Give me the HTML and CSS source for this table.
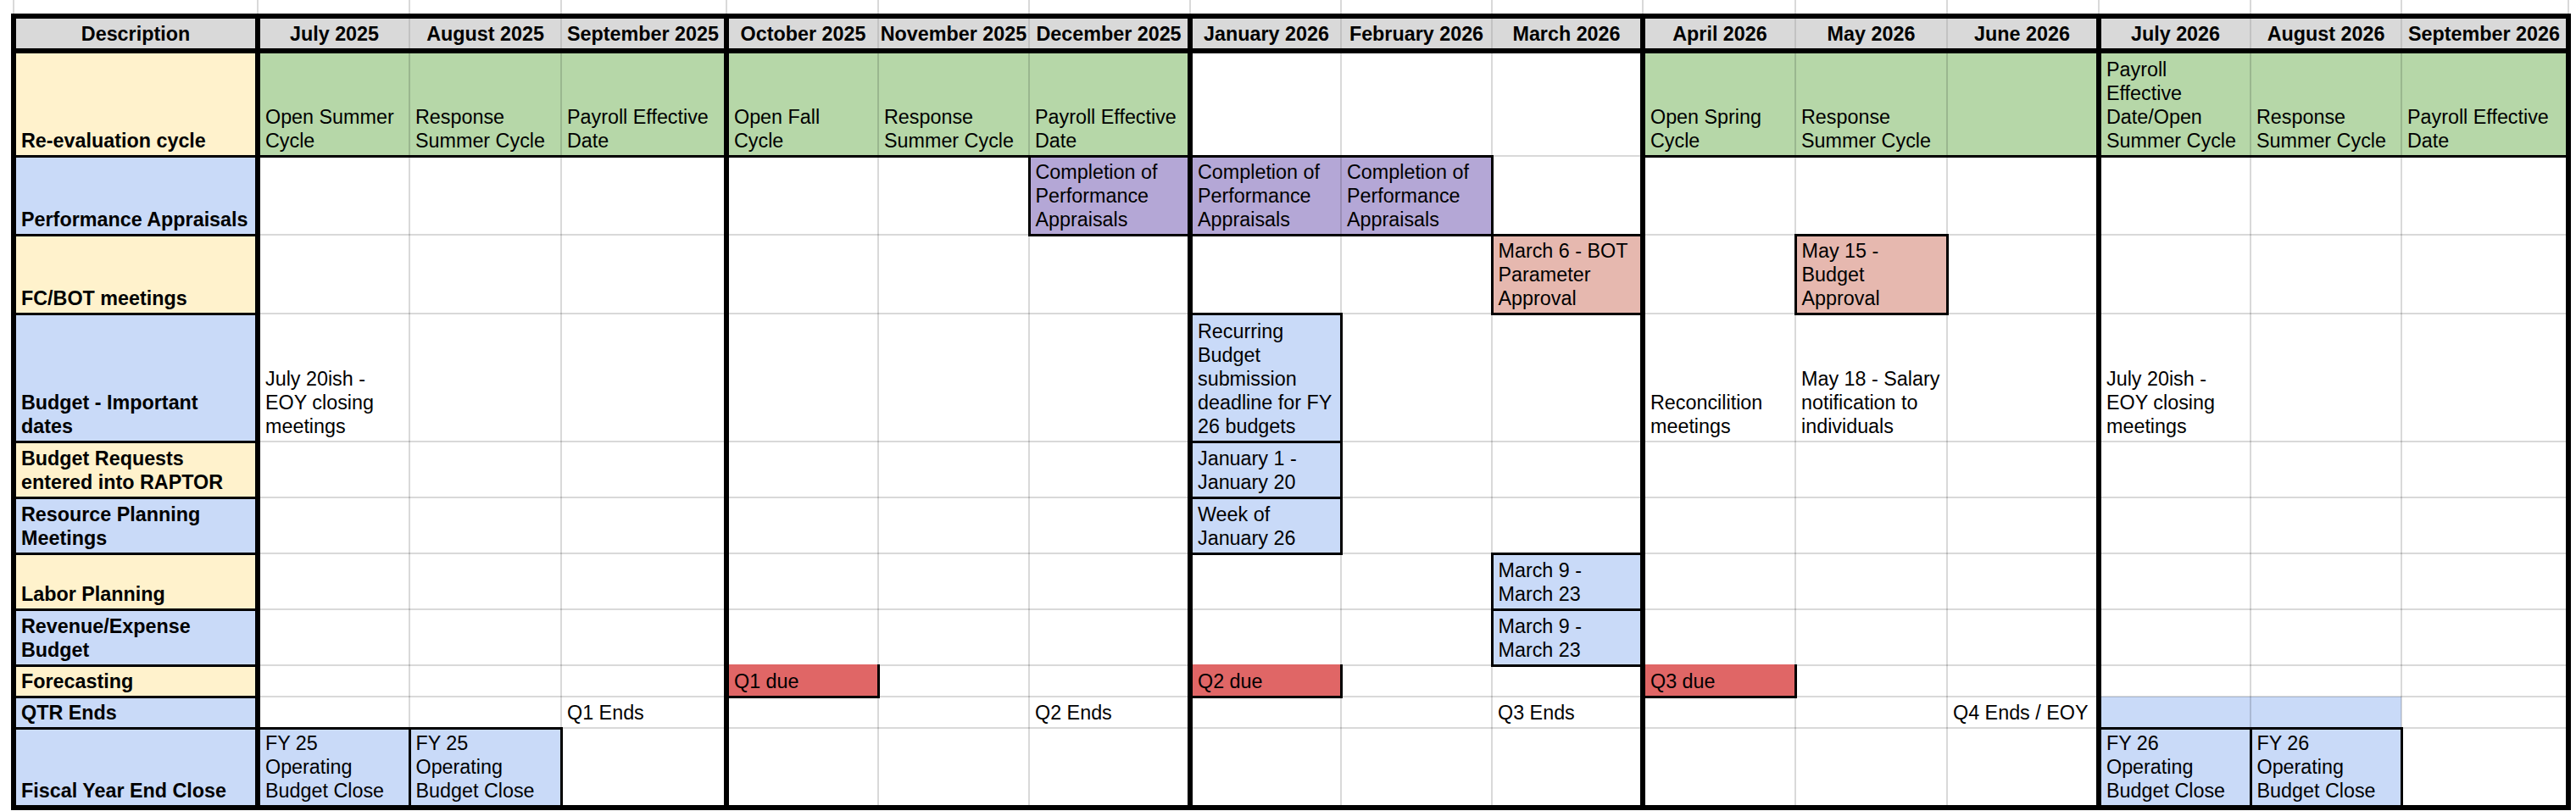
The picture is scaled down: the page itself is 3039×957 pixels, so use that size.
FILE: index.html
```html
<!DOCTYPE html>
<html lang="en">
<head>
  <meta charset="UTF-8" />
  <title>Budget Calendar FY26</title>
  <link rel="stylesheet" href="styles.css">
</head>
<body>

  <!-- empty sheet row above the table -->
  <div class="strip">
    <div></div><div></div><div></div><div></div><div></div><div></div><div></div><div></div>
    <div></div><div></div><div></div><div></div><div></div><div></div><div></div><div></div>
  </div>

  <table class="sheet">
    <colgroup class="quarter"><col class="c-desc"></colgroup>
    <colgroup class="quarter"><col class="c-179"><col class="c-179"><col class="c-195"></colgroup>
    <colgroup class="quarter"><col class="c-179"><col class="c-178"><col class="c-190"></colgroup>
    <colgroup class="quarter"><col class="c-178"><col class="c-178"><col class="c-178"></colgroup>
    <colgroup class="quarter"><col class="c-180"><col class="c-179"><col class="c-179"></colgroup>
    <colgroup class="quarter"><col class="c-179"><col class="c-178"><col class="c-197"></colgroup>

    <thead>
      <tr class="r-head">
        <th>Description</th>
        <th>July 2025</th>
        <th>August 2025</th>
        <th>September 2025</th>
        <th>October 2025</th>
        <th>November 2025</th>
        <th>December 2025</th>
        <th>January 2026</th>
        <th>February 2026</th>
        <th>March 2026</th>
        <th>April 2026</th>
        <th>May 2026</th>
        <th>June 2026</th>
        <th>July 2026</th>
        <th>August 2026</th>
        <th>September 2026</th>
      </tr>
    </thead>

    <tbody>
      <!-- Re-evaluation cycle -->
      <tr class="r-cycle">
        <td class="desc yellow">Re-evaluation cycle</td>
        <td class="green">Open Summer Cycle</td>
        <td class="green">Response Summer Cycle</td>
        <td class="green">Payroll Effective Date</td>
        <td class="green">Open Fall Cycle</td>
        <td class="green">Response Summer Cycle</td>
        <td class="green">Payroll Effective Date</td>
        <td></td>
        <td></td>
        <td></td>
        <td class="green">Open Spring Cycle</td>
        <td class="green">Response Summer Cycle</td>
        <td class="green"></td>
        <td class="green">Payroll<br>Effective Date/Open Summer Cycle</td>
        <td class="green">Response Summer Cycle</td>
        <td class="green">Payroll Effective Date</td>
      </tr>

      <!-- Performance Appraisals -->
      <tr class="r-3line">
        <td class="desc blue">Performance Appraisals</td>
        <td></td>
        <td></td>
        <td></td>
        <td></td>
        <td></td>
        <td class="purple box">Completion of Performance Appraisals</td>
        <td class="purple box open-r">Completion of Performance Appraisals</td>
        <td class="purple box open-l">Completion of Performance Appraisals</td>
        <td></td>
        <td></td>
        <td></td>
        <td></td>
        <td></td>
        <td></td>
        <td></td>
      </tr>

      <!-- FC/BOT meetings -->
      <tr class="r-3line">
        <td class="desc yellow">FC/BOT meetings</td>
        <td></td>
        <td></td>
        <td></td>
        <td></td>
        <td></td>
        <td></td>
        <td></td>
        <td></td>
        <td class="salmon box">March 6 - BOT Parameter Approval</td>
        <td></td>
        <td class="salmon box">May 15 - Budget Approval</td>
        <td></td>
        <td></td>
        <td></td>
        <td></td>
      </tr>

      <!-- Budget - Important dates -->
      <tr class="r-budget">
        <td class="desc blue">Budget - Important dates</td>
        <td>July 20ish - EOY closing meetings</td>
        <td></td>
        <td></td>
        <td></td>
        <td></td>
        <td></td>
        <td class="blue box">Recurring Budget submission deadline for FY 26 budgets</td>
        <td></td>
        <td></td>
        <td>Reconcilition meetings</td>
        <td>May 18 - Salary notification to individuals</td>
        <td></td>
        <td>July 20ish - EOY closing meetings</td>
        <td></td>
        <td></td>
      </tr>

      <!-- Budget Requests -->
      <tr class="r-2line">
        <td class="desc yellow">Budget Requests entered into RAPTOR</td>
        <td></td>
        <td></td>
        <td></td>
        <td></td>
        <td></td>
        <td></td>
        <td class="blue box">January 1 - January 20</td>
        <td></td>
        <td></td>
        <td></td>
        <td></td>
        <td></td>
        <td></td>
        <td></td>
        <td></td>
      </tr>

      <!-- Resource Planning Meetings -->
      <tr class="r-2line">
        <td class="desc blue">Resource Planning Meetings</td>
        <td></td>
        <td></td>
        <td></td>
        <td></td>
        <td></td>
        <td></td>
        <td class="blue box">Week of January 26</td>
        <td></td>
        <td></td>
        <td></td>
        <td></td>
        <td></td>
        <td></td>
        <td></td>
        <td></td>
      </tr>

      <!-- Labor Planning -->
      <tr class="r-2line">
        <td class="desc yellow">Labor Planning</td>
        <td></td>
        <td></td>
        <td></td>
        <td></td>
        <td></td>
        <td></td>
        <td></td>
        <td></td>
        <td class="blue box">March 9 - March 23</td>
        <td></td>
        <td></td>
        <td></td>
        <td></td>
        <td></td>
        <td></td>
      </tr>

      <!-- Revenue/Expense Budget -->
      <tr class="r-2line">
        <td class="desc blue">Revenue/Expense Budget</td>
        <td></td>
        <td></td>
        <td></td>
        <td></td>
        <td></td>
        <td></td>
        <td></td>
        <td></td>
        <td class="blue box">March 9 - March 23</td>
        <td></td>
        <td></td>
        <td></td>
        <td></td>
        <td></td>
        <td></td>
      </tr>

      <!-- Forecasting -->
      <tr class="r-1line">
        <td class="desc yellow">Forecasting</td>
        <td></td>
        <td></td>
        <td></td>
        <td class="red box">Q1 due</td>
        <td></td>
        <td></td>
        <td class="red box">Q2 due</td>
        <td></td>
        <td></td>
        <td class="red box">Q3 due</td>
        <td></td>
        <td></td>
        <td></td>
        <td></td>
        <td></td>
      </tr>

      <!-- QTR Ends -->
      <tr class="r-1line nowrap">
        <td class="desc blue">QTR Ends</td>
        <td></td>
        <td></td>
        <td>Q1 Ends</td>
        <td></td>
        <td></td>
        <td>Q2 Ends</td>
        <td></td>
        <td></td>
        <td>Q3 Ends</td>
        <td></td>
        <td></td>
        <td>Q4 Ends / EOY</td>
        <td class="blue"></td>
        <td class="blue"></td>
        <td></td>
      </tr>

      <!-- Fiscal Year End Close -->
      <tr class="r-fiscal">
        <td class="desc blue">Fiscal Year End Close</td>
        <td class="blue box">FY 25 Operating Budget Close</td>
        <td class="blue box">FY 25 Operating Budget Close</td>
        <td></td>
        <td></td>
        <td></td>
        <td></td>
        <td></td>
        <td></td>
        <td></td>
        <td></td>
        <td></td>
        <td></td>
        <td class="blue box">FY 26 Operating Budget Close</td>
        <td class="blue box">FY 26 Operating Budget Close</td>
        <td></td>
      </tr>
    </tbody>
  </table>

</body>
</html>
```

FILE: styles.css
```css
* {
  box-sizing: border-box;
}

body {
  margin: 0;
  background: #fff;
  color: #000;
  font-family: "Liberation Sans", Arial, sans-serif;
  font-size: 23.33px;
  line-height: 28px;
}

/* Empty sheet row at the top */
.strip {
  display: grid;
  grid-template-columns: 290px 179px 179px 195px 179px 178px 190px 178px 178px 178px 180px 179px 179px 179px 178px 197px;
  height: 16px;
  margin-left: 15px;
}

.strip div {
  border-right: 2px solid #d9d9d9;
}

.strip div:first-child {
  border-left: 2px solid #d9d9d9;
}

/* Sheet */
.sheet {
  border-collapse: collapse;
  table-layout: fixed;
  width: 3020px;
  margin-left: 13px;
  border: 6px solid #000;
}

.quarter {
  border-left: 6px solid #000;
  border-right: 6px solid #000;
}

.c-desc { width: 288px; }
.c-178 { width: 178px; }
.c-179 { width: 179px; }
.c-180 { width: 180px; }
.c-190 { width: 190px; }
.c-195 { width: 195px; }
.c-197 { width: 197px; }

.sheet th,
.sheet td {
  border: 2px solid rgba(0, 0, 0, 0.15);
  padding: 0 5px 3px 6px;
  vertical-align: bottom;
  text-align: left;
  font-weight: normal;
}

.sheet thead th {
  background: #d9d9d9;
  border-color: rgba(0, 0, 0, 0.1);
  border-bottom: 6px solid #000;
  font-weight: bold;
  text-align: center;
  vertical-align: middle;
  white-space: nowrap;
  padding: 0;
}

/* Row heights */
.r-head { height: 41px; }
.r-cycle { height: 124px; }
.r-3line { height: 93px; }
.r-budget { height: 151px; }
.r-2line { height: 66px; }
.r-1line { height: 37px; }
.r-fiscal { height: 94px; }

.nowrap td {
  white-space: nowrap;
}

/* Cell fills */
.sheet .desc {
  font-weight: bold;
  border: 3px solid #000;
}

.yellow { background: #fff2cc; }
.blue { background: #c9daf8; }
.green { background: #b6d7a8; }
.purple { background: #b4a7d6; }
.salmon { background: #e6b8af; }
.red { background: #e06666; }

.sheet .green {
  border-bottom: 3px solid #000;
}

.sheet .box {
  border: 3px solid #000;
}

.sheet .red {
  border-top-color: #e06666;
}

.sheet .open-r {
  border-right: 2px solid rgba(0, 0, 0, 0.15);
}

.sheet .open-l {
  border-left: 2px solid rgba(0, 0, 0, 0.15);
}
```
